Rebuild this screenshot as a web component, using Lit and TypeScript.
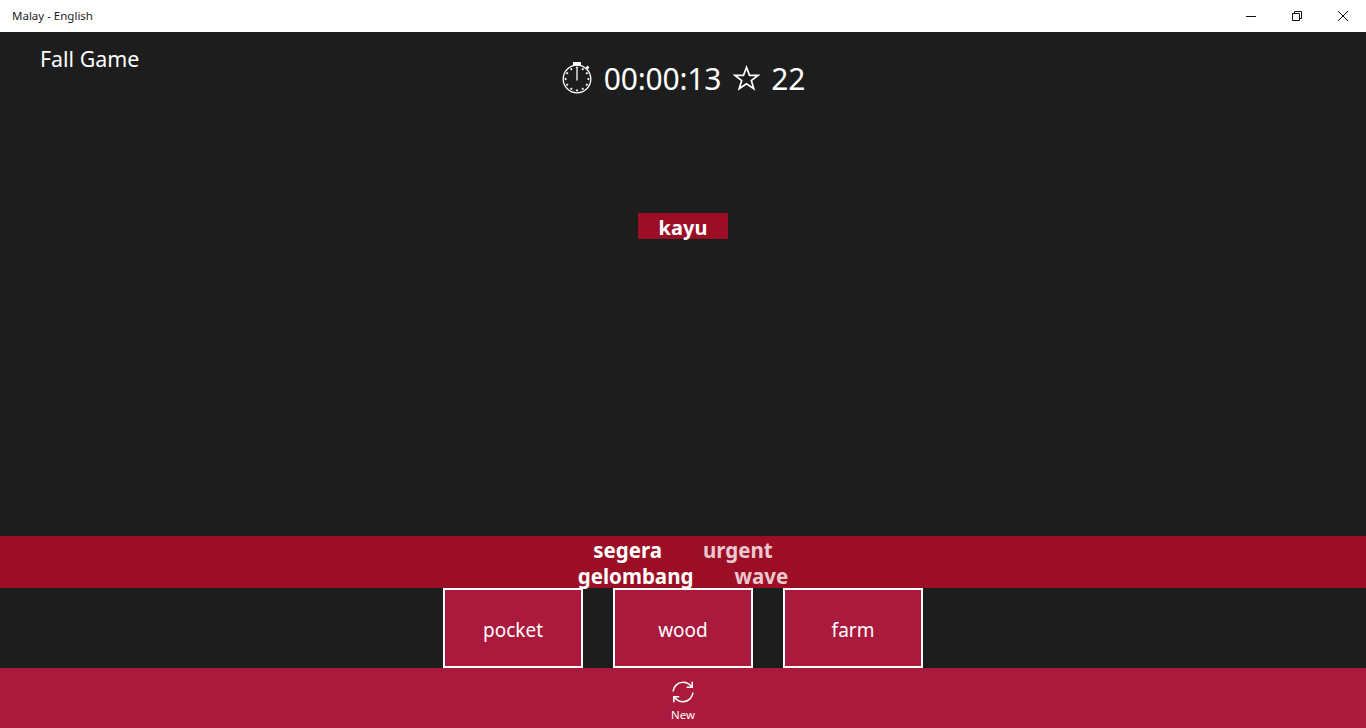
import { LitElement, html, css, svg } from "lit";
import { customElement } from "lit/decorators.js";

const ticks = Array.from({ length: 12 }, (_, i) => {
  const a = (i * Math.PI) / 6;
  const x = 16 + Math.sin(a) * 11.4;
  const y = 17 - Math.cos(a) * 11.4;
  return svg`<circle cx=${x.toFixed(2)} cy=${y.toFixed(2)} r="0.7" fill="#fff"></circle>`;
});

@customElement("app-root")
export class AppRoot extends LitElement {
  static styles = css`
    :host {
      display: flex;
      flex-direction: column;
      width: 1366px;
      height: 728px;
      overflow: hidden;
      background: #1d1d1d;
      color: #fff;
      font-family: "Noto Sans", "Open Sans", sans-serif;
    }
    .titlebar {
      flex: 0 0 32px;
      display: flex;
      align-items: center;
      justify-content: space-between;
      background: #fff;
      color: #222;
    }
    .apptitle { padding-left: 12px; font-size: 11.5px; line-height: 16px; }
    .winbtns { display: flex; }
    .winbtn {
      width: 46px;
      height: 32px;
      display: flex;
      align-items: center;
      justify-content: center;
    }
    .game {
      flex: 1;
      position: relative;
      min-height: 0;
    }
    .heading {
      padding: 11px 0 0 40px;
      font-size: 21.4px;
      line-height: 32px;
      height: 32px;
    }
    .stats {
      position: absolute;
      top: 27px;
      left: 0;
      right: 0;
      display: flex;
      justify-content: center;
      align-items: center;
      font-size: 30px;
      line-height: 40px;
      font-weight: 400;
      letter-spacing: -0.2px;
    }
    .watch { margin: -2px 11px 0 0; }
    .star { margin: -2px 11px 0 12px; }
    .falling {
      position: absolute;
      left: 638px;
      top: 181px;
      width: 90px;
      height: 26px;
      background: #9c0e25;
      border-bottom: 1px solid #8a1026;
      box-sizing: border-box;
      text-align: center;
      font-weight: 700;
      font-size: 20px;
      line-height: 29px;
    }
    .band {
      flex: 0 0 52px;
      min-height: 0;
      box-sizing: border-box;
      padding-top: 1px;
      background: #9c0e25;
      display: flex;
      flex-direction: column;
      align-items: center;
      font-weight: 700;
      font-size: 20.5px;
      line-height: 26px;
    }
    .pair { display: flex; flex: none; gap: 41px; }
    .pair span { display: block; white-space: nowrap; }
    .fade { color: #ebc8cf; }
    .choices {
      flex: 0 0 80px;
      display: flex;
      justify-content: center;
      gap: 30px;
    }
    .choice {
      width: 140px;
      height: 80px;
      box-sizing: border-box;
      border: 2px solid #fff;
      background: #aa1a3c;
      display: flex;
      align-items: center;
      justify-content: center;
      font-size: 19px;
      padding-top: 3px;
    }
    .appbar {
      flex: 0 0 60px;
      background: #aa1a3c;
      display: flex;
      flex-direction: column;
      align-items: center;
    }
    .appbar svg { margin-top: 12px; }
    .appbar .label { font-size: 11.4px; line-height: 16px; margin-top: 3px; }
  `;

  render() {
    return html`
      <div class="titlebar">
        <div class="apptitle">Malay - English</div>
        <div class="winbtns">
          <div class="winbtn">
            <svg width="12" height="12" viewBox="0 0 12 12"><path d="M1 6.500h10" stroke="#111" fill="none"></path></svg>
          </div>
          <div class="winbtn">
            <svg width="12" height="12" viewBox="0 0 12 12" fill="none" stroke="#111"><path d="M1.500 3.500h7v7h-7zM3.500 3.500v-2h7v7h-2"></path></svg>
          </div>
          <div class="winbtn">
            <svg width="12" height="12" viewBox="0 0 12 12" fill="none" stroke="#111"><path d="M1 1l10 10M11 1L1 11"></path></svg>
          </div>
        </div>
      </div>
      <div class="game">
        <div class="heading">Fall Game</div>
        <div class="stats">
          <svg class="watch" width="32" height="32" viewBox="0 0 32 32" fill="none" stroke="#fff">
            <circle cx="16" cy="17" r="13.800" stroke-width="1.300"></circle>
            <path d="M12 1.500h8" stroke-width="3"></path>
            <path d="M16 3v1" stroke-width="1.500"></path>
            <path d="M25.500 6.500l2-2" stroke-width="2.600"></path>
            <path d="M16 6.500v12" stroke-width="1.300"></path>
            ${ticks}
          </svg>
          <span>00:00:13</span>
          <svg class="star" width="27" height="26" viewBox="0 0 27 26" fill="none" stroke="#fff" stroke-width="1.700">
            <path d="M13.500 2.400l3 8h8.600l-6.800 5.200 2.500 8.200-7.300-5-7.300 5 2.500-8.200-6.800-5.200h8.600z"></path>
          </svg>
          <span>22</span>
        </div>
        <div class="falling">kayu</div>
      </div>
      <div class="band">
        <div class="pair"><span>segera</span><span class="fade">urgent</span></div>
        <div class="pair"><span>gelombang</span><span class="fade">wave</span></div>
      </div>
      <div class="choices">
        <div class="choice">pocket</div>
        <div class="choice">wood</div>
        <div class="choice">farm</div>
      </div>
      <div class="appbar">
        <svg width="24" height="24" viewBox="0 0 24 24" fill="none" stroke="#fff" stroke-width="1.600">
          <path d="M2 11.500C2.500 6 7 2.200 12 2.200c3.500 0 6.500 1.800 8.500 4.500"></path>
          <path d="M21.200 1.800v5.500h-5.500"></path>
          <path d="M22 12.500C21.500 18 17 21.800 12 21.800c-3.500 0-6.500-1.800-8.500-4.500"></path>
          <path d="M2.800 22.200v-5.500h5.500"></path>
        </svg>
        <div class="label">New</div>
      </div>
    `;
  }
}
